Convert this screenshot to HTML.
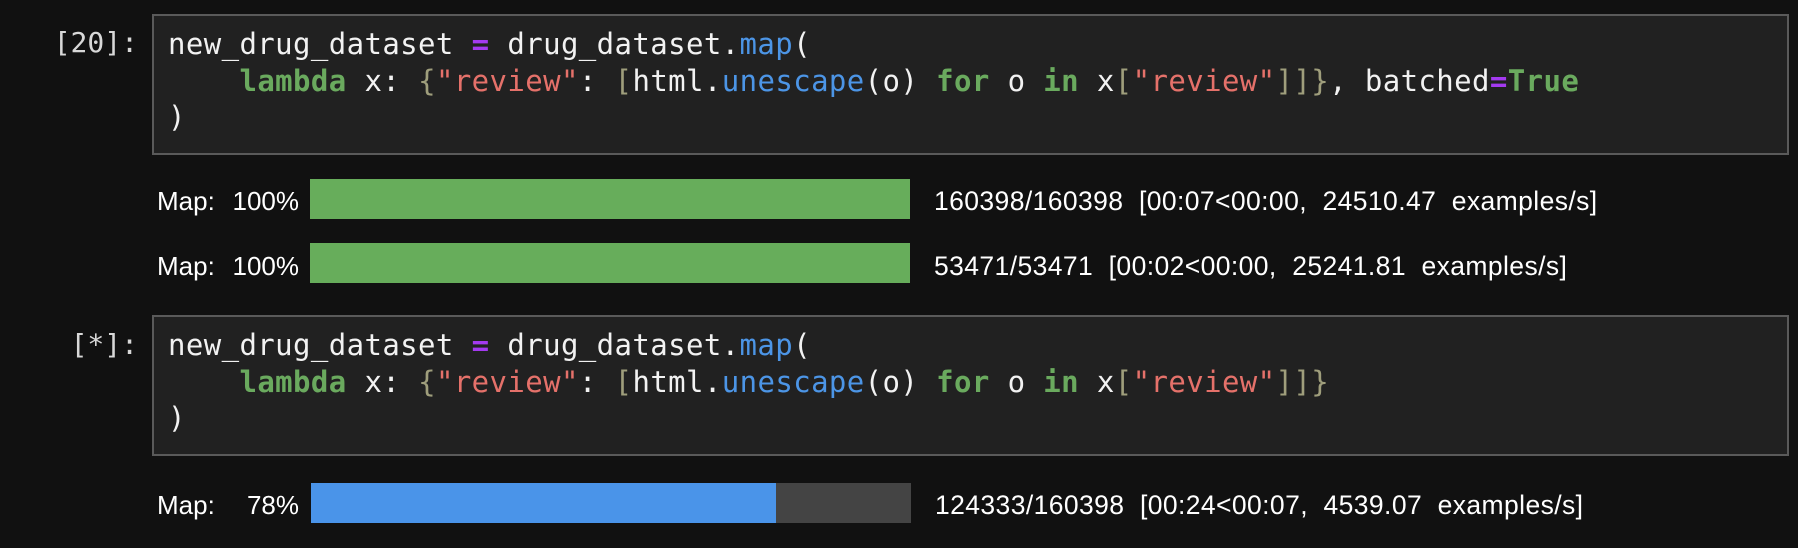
<!DOCTYPE html>
<html><head><meta charset="utf-8"><style>
body{margin:0;width:1798px;height:548px;background:#111111;position:relative;overflow:hidden}
.box{position:absolute;left:152px;width:1637px;height:141px;background:#212121;border:2px solid #5a5a5a;box-sizing:border-box}
pre{margin:0;position:absolute;left:14px;top:10px;font-family:"DejaVu Sans Mono","Liberation Mono",monospace;font-size:29px;line-height:36.5px;color:#f2f2f2;letter-spacing:0.4px}
.p{position:absolute;right:1660px;font-family:"DejaVu Sans Mono","Liberation Mono",monospace;font-size:28px;color:#d8d8d8}
.k{color:#6aaa5e;font-weight:bold}.o{color:#a43af0;font-weight:bold}.f{color:#4c95e6}.s{color:#e5716a}.b{color:#9f9e7c}
.lab{position:absolute;left:157px;font-family:"Liberation Sans",sans-serif;font-size:26px;color:#fff;width:142px;white-space:pre}
.lab span{position:absolute;right:0}
.bar{position:absolute;left:310px;width:600px;height:40px;background:#444}
.txt{position:absolute;font-family:"Liberation Sans",sans-serif;font-size:26.5px;color:#fff;white-space:pre;letter-spacing:0.4px}
</style></head><body>
<div class="p" style="top:26px;right:1660px">[20]:</div>
<div class="box" style="top:14px"><pre>new_drug_dataset <span class="o">=</span> drug_dataset.<span class="f">map</span>(
    <span class="k">lambda</span> x: <span class="b">{</span><span class="s">"review"</span>: <span class="b">[</span>html.<span class="f">unescape</span>(o) <span class="k">for</span> o <span class="k">in</span> x<span class="b">[</span><span class="s">"review"</span><span class="b">]]}</span>, batched<span class="o">=</span><span class="k">True</span>
)</pre></div>
<div class="lab" style="top:186px">Map:<span>100%</span></div>
<div class="bar" style="top:179px;background:#67ad5b"></div>
<div class="txt" style="left:934px;top:186px">160398/160398  [00:07&lt;00:00,  24510.47  examples/s]</div>
<div class="lab" style="top:251px">Map:<span>100%</span></div>
<div class="bar" style="top:243px;background:#67ad5b"></div>
<div class="txt" style="left:934px;top:251px">53471/53471  [00:02&lt;00:00,  25241.81  examples/s]</div>
<div class="p" style="top:328px">[*]:</div>
<div class="box" style="top:315px"><pre>new_drug_dataset <span class="o">=</span> drug_dataset.<span class="f">map</span>(
    <span class="k">lambda</span> x: <span class="b">{</span><span class="s">"review"</span>: <span class="b">[</span>html.<span class="f">unescape</span>(o) <span class="k">for</span> o <span class="k">in</span> x<span class="b">[</span><span class="s">"review"</span><span class="b">]]}</span>
)</pre></div>
<div class="lab" style="top:490px">Map:<span>78%</span></div>
<div class="bar" style="top:483px;left:311px"><div style="width:465px;height:100%;background:#4a94e9"></div></div>
<div class="txt" style="left:935px;top:490px">124333/160398  [00:24&lt;00:07,  4539.07  examples/s]</div>
</body></html>
